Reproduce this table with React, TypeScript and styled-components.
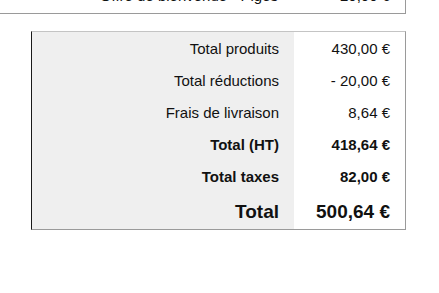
import styled, { createGlobalStyle } from "styled-components";

const Global = createGlobalStyle`
  html, body {
    margin: 0;
    padding: 0;
    background: #ffffff;
  }
  body {
    font-family: "Liberation Sans", Arial, sans-serif;
    color: #111111;
    overflow: hidden;
  }
`;

const Page = styled.div`
  width: 439px;
  height: 293px;
  display: flex;
  flex-direction: column;
  gap: 17px;
`;

const DiscountTable = styled.div`
  margin-top: -20px;
  margin-left: -10px;
  width: 416px;
  height: 34px;
  box-sizing: border-box;
  border: 1px solid #9a9a9a;
  border-left-color: #1a1a1a;
  display: grid;
  grid-template-columns: 1fr 112px;
  align-items: end;
`;

const DiscountCell = styled.div<{ $align: "left" | "right" }>`
  font-size: 15px;
  line-height: 17px;
  padding: 0 15px 9px;
  text-align: ${(p) => p.$align};
  color: #111111;
`;

const TotalsTable = styled.div`
  margin-left: 31px;
  width: 375px;
  box-sizing: border-box;
  border: 1px solid #9a9a9a;
  border-top-color: #c4c4c4;
  border-left-color: #1a1a1a;
  display: grid;
  grid-template-columns: 1fr 111px;
`;

const Label = styled.div<{ $bold?: boolean; $big?: boolean }>`
  background: #efefef;
  text-align: right;
  padding: 0 15px;
  height: ${(p) => (p.$big ? "37px" : "32px")};
  line-height: ${(p) => (p.$big ? "39px" : "33px")};
  font-size: ${(p) => (p.$big ? "19px" : "15px")};
  font-weight: ${(p) => (p.$bold ? 700 : 400)};
  white-space: nowrap;
`;

const Value = styled(Label)`
  background: #ffffff;
`;

const rows = [
  { label: "Total produits", value: "430,00 €" },
  { label: "Total réductions", value: "- 20,00 €" },
  { label: "Frais de livraison", value: "8,64 €" },
  { label: "Total (HT)", value: "418,64 €", bold: true },
  { label: "Total taxes", value: "82,00 €", bold: true },
  { label: "Total", value: "500,64 €", bold: true, big: true },
];

export default function App() {
  return (
    <Page>
      <Global />
      <DiscountTable>
        <DiscountCell $align="right">Offre de bienvenue - Piges</DiscountCell>
        <DiscountCell $align="right">20,00 €</DiscountCell>
      </DiscountTable>
      <TotalsTable>
        {rows.flatMap((r) => [
          <Label key={r.label + "-l"} $bold={r.bold} $big={r.big}>
            {r.label}
          </Label>,
          <Value key={r.label + "-v"} $bold={r.bold} $big={r.big}>
            {r.value}
          </Value>,
        ])}
      </TotalsTable>
    </Page>
  );
}
